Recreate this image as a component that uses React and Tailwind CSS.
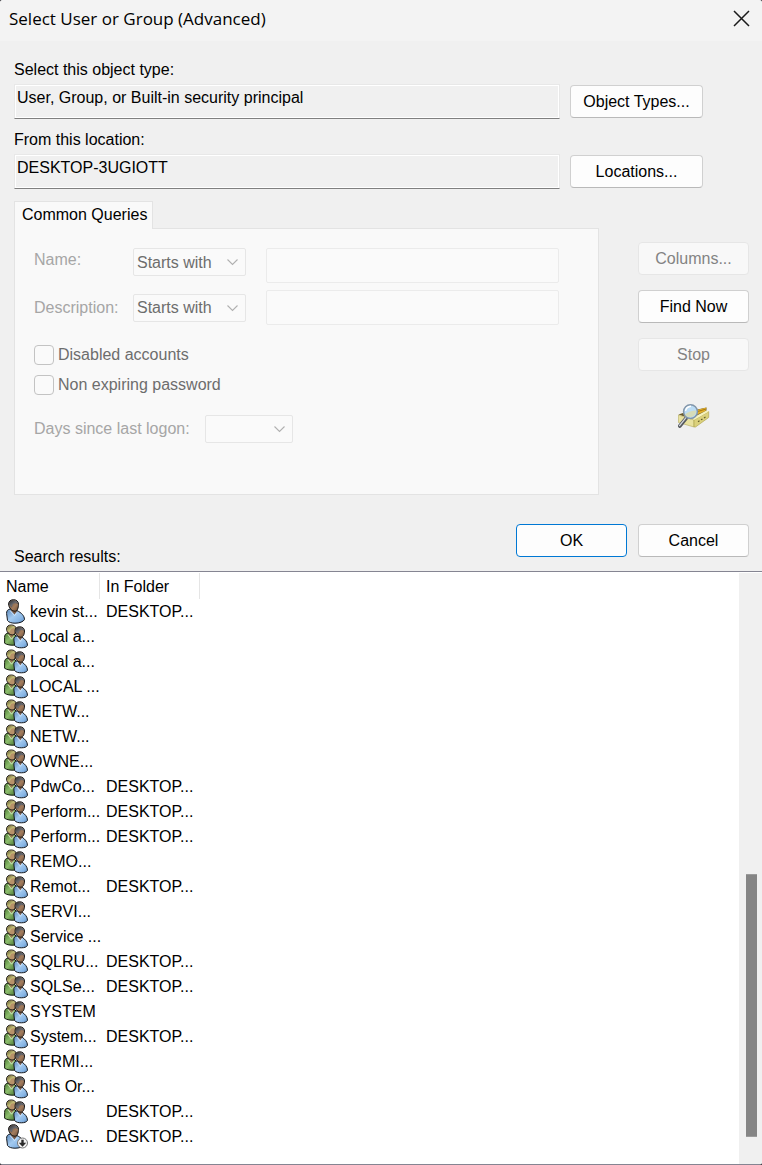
import { useState } from "react";
import clsx from "clsx";

const DESKTOP = "DESKTOP...";

const results = [
  { name: "kevin st...", folder: DESKTOP, type: "user" },
  { name: "Local a...", folder: "", type: "group" },
  { name: "Local a...", folder: "", type: "group" },
  { name: "LOCAL ...", folder: "", type: "group" },
  { name: "NETW...", folder: "", type: "group" },
  { name: "NETW...", folder: "", type: "group" },
  { name: "OWNE...", folder: "", type: "group" },
  { name: "PdwCo...", folder: DESKTOP, type: "group" },
  { name: "Perform...", folder: DESKTOP, type: "group" },
  { name: "Perform...", folder: DESKTOP, type: "group" },
  { name: "REMO...", folder: "", type: "group" },
  { name: "Remot...", folder: DESKTOP, type: "group" },
  { name: "SERVI...", folder: "", type: "group" },
  { name: "Service ...", folder: "", type: "group" },
  { name: "SQLRU...", folder: DESKTOP, type: "group" },
  { name: "SQLSe...", folder: DESKTOP, type: "group" },
  { name: "SYSTEM", folder: "", type: "group" },
  { name: "System...", folder: DESKTOP, type: "group" },
  { name: "TERMI...", folder: "", type: "group" },
  { name: "This Or...", folder: "", type: "group" },
  { name: "Users", folder: DESKTOP, type: "group" },
  { name: "WDAG...", folder: DESKTOP, type: "disabled" },
];

// gradients shared by all the people icons
const IconDefs = () => (
  <svg width="0" height="0" className="absolute" aria-hidden="true">
    <defs>
      <linearGradient id="blue" x1="0" y1="0" x2="1" y2="1">
        <stop offset="0" stopColor="#5a86b8" />
        <stop offset="0.45" stopColor="#a3caf0" />
        <stop offset="0.75" stopColor="#86b4e4" />
        <stop offset="1" stopColor="#4f7cb0" />
      </linearGradient>
      <linearGradient id="green" x1="0" y1="0" x2="1" y2="1">
        <stop offset="0" stopColor="#4a7a34" />
        <stop offset="0.45" stopColor="#8dbd6c" />
        <stop offset="1" stopColor="#3f6b2c" />
      </linearGradient>
      <linearGradient id="face" x1="0" y1="0" x2="1" y2="1">
        <stop offset="0" stopColor="#6b4f3c" />
        <stop offset="0.6" stopColor="#a37d5e" />
        <stop offset="1" stopColor="#6d4d37" />
      </linearGradient>
      <linearGradient id="hair" x1="0" y1="0" x2="1" y2="1">
        <stop offset="0" stopColor="#2e2e30" />
        <stop offset="0.5" stopColor="#6b6b70" />
        <stop offset="1" stopColor="#3c3c3e" />
      </linearGradient>
      <linearGradient id="blond" x1="0" y1="0" x2="1" y2="1">
        <stop offset="0" stopColor="#5f5c2c" />
        <stop offset="0.5" stopColor="#c4bd78" />
        <stop offset="1" stopColor="#807a44" />
      </linearGradient>
    </defs>
  </svg>
);

const UserIcon = ({ disabled }) => (
  <svg className="shrink-0" width="24" height="25" viewBox="0 0 24 25" aria-hidden="true">
    <path
      d="M6 10C3.700 10.500 2.400 12 2.600 14.500L3.500 21.500C4.800 23.500 8 24.200 11 24.200c4.500 0 8.300-1.400 9.500-3.700C20.300 16.500 17.500 14 13 11.500z"
      fill="url(#blue)"
      stroke="#14181f"
      strokeWidth="1"
    />
    <path d="M6.500 11 10.500 15.500 13.300 12 10 10z" fill="#7a5a44" />
    <path d="M6 11.500 10.500 16.700 13 13.500" fill="none" stroke="#cfe4fa" strokeWidth="0.900" />
    <path
      d="M4.600 5C4.600 2.200 6.700.7 9.500.7s5 1.600 5 4.600c0 3.300-1 6.900-3.600 6.900C8 12.200 4.600 8.800 4.600 5z"
      fill="url(#face)"
      stroke="#161616"
      strokeWidth="1"
    />
    <path d="M5.100 6C4.700 3 6.500 1.200 9.500 1.200S14 2.900 14 5C12.300 4 10.200 4.200 9 5L7.700 8.500z" fill="url(#hair)" />
    {disabled && (
      <g>
        <circle cx="18.500" cy="19" r="5" fill="#f0f0f0" stroke="#777" />
        <path d="M17.300 15.800h2.400v2.900h2.500l-3.700 4-3.700-4h2.500z" fill="#2b2b2b" />
      </g>
    )}
  </svg>
);

const GroupIcon = () => (
  <svg className="shrink-0" width="24" height="25" viewBox="0 0 24 25" aria-hidden="true">
    <path
      d="M4 9C1.500 9.500.5 11 .6 13.500v5.700c2 1.600 6 2.300 10.900 1.900L13 13 9 9z"
      fill="url(#green)"
      stroke="#141a10"
      strokeWidth="1"
    />
    <path d="m4.300 10 3.200 4 2.500-3z" fill="#a07a54" />
    <path d="m3.900 10.500 3.700 4.700 2-2.700" fill="none" stroke="#d4e8c0" strokeWidth="0.900" />
    <path
      d="M2.600 5c0-2.700 2-4 4.700-4S12 2.300 12 5c0 3-1.200 6-3.800 6S2.600 8.400 2.600 5z"
      fill="#b8926a"
      stroke="#161616"
      strokeWidth="1"
    />
    <path d="M3.100 6.500C2.600 3.300 4.300 1.500 7.300 1.500s4.200 1.500 4.200 3.500C9.900 4 8.300 4.200 7 5L5.700 8.500z" fill="url(#blond)" />
    <path
      d="M13.300 11.700c-2.500.5-3.700 2-3.400 4.300l.7 5.500c1.500 1.900 4 2.300 6.700 2.300 3.200 0 5.400-.8 6.200-2.500-.1-3.500-2.200-6-5.500-8.100z"
      fill="url(#blue)"
      stroke="#14181f"
      strokeWidth="1"
    />
    <path d="m13.300 12.500 3 3.700 2.400-3.200z" fill="#7a5a44" />
    <path d="m12.900 13 3.500 4.300 1.900-2.800" fill="none" stroke="#cfe4fa" strokeWidth="0.900" />
    <path
      d="M11 6.800c0-2.700 2-4 4.700-4s4.800 1.500 4.800 4.200c0 3.200-1.200 6.200-3.700 6.200-2.700 0-5.800-3-5.800-6.400z"
      fill="url(#face)"
      stroke="#161616"
      strokeWidth="1"
    />
    <path d="M11.500 8c-.5-3.200 1.200-4.700 4.200-4.700s4.400 1.500 4.300 3.500c-1.600-1-3.200-.9-4.400-.1l-1.500 3.300z" fill="url(#hair)" />
  </svg>
);

const SearchFolderIcon = () => (
  <svg width="32" height="24" viewBox="0 0 32 24" aria-hidden="true">
    <path d="M.5 10.500 8 8l20.500-4.500V7L16 16z" fill="#6a5a2a" />
    <path d="M17 6.500 28.500 3.500 27.500 7 18 11z" fill="#e3b02a" />
    <path d="m18 8 10-3" stroke="#a87812" />
    <path d="M.3 11 16 16v7L.5 18.500z" fill="#e9e2a0" stroke="#b3a95c" strokeWidth="0.600" />
    <path d="M16 16 30.700 7.500v6L17.500 23H16z" fill="#dbd17c" stroke="#a99d45" strokeWidth="0.600" />
    <path d="m13 14.500 15.500-8 2.200 1L16 16z" fill="#f7f3bd" />
    <path d="m20 17.700 1.500-.9m1.500-1 1.500-.9m1.500-1 1.500-.9" stroke="#625b2a" strokeWidth="1.200" />
    <path d="m1.800 22 6.500-8" stroke="#55595f" strokeWidth="3.600" strokeLinecap="round" />
    <path d="M1.500 21.600 8 13.700" stroke="#d3d7dc" strokeWidth="1.300" strokeLinecap="round" />
    <circle cx="12.500" cy="7.700" r="6.900" fill="#bcdcf4" stroke="#8296aa" strokeWidth="1.500" />
    <path d="M7 10.500c3-2.500 7-4 11.200-4-.2 4-2.700 6.500-5.700 6.500S8 12.500 7 10.500z" fill="#d6dcb9" />
    <path d="M7.500 7C8 4 10 2.500 13 2.200" stroke="#fff" strokeWidth="1.500" fill="none" />
  </svg>
);

const Button = ({ children, primary, className, ...props }) => (
  <button
    type="button"
    className={clsx(
      "h-[33px] shrink-0 rounded-[4px] border text-center",
      primary && "border-[#0078d4] bg-[#fdfdfd]",
      !primary &&
        "border-[#d0d0d0] border-b-[#b9b9b9] bg-[#fdfdfd] disabled:border-[#e6e6e6] disabled:bg-[#f8f8f8] disabled:text-[#838383]",
      className
    )}
    {...props}
  >
    {children}
  </button>
);

const ReadOnlyField = ({ id, label, value, button }) => (
  <div>
    <label htmlFor={id} className="block">
      {label}
    </label>
    <div className="mt-[2px] flex items-center gap-[10px]">
      <div className="min-w-0 flex-1 border border-[#e8e8e8] border-b-[#7f7f7f]">
        <input
          id={id}
          readOnly
          value={value}
          className="block h-[33px] w-full border border-white bg-transparent px-px pb-[8px] outline-none"
        />
      </div>
      <Button className="w-[133px]">{button}</Button>
    </div>
  </div>
);

const Dropdown = ({ id, options, className }) => (
  <div className={clsx("relative h-[28px]", className)}>
    <select
      id={id}
      disabled
      className="block h-full w-full appearance-none rounded-[2px] border border-[#e6e6e6] bg-[#fafafa] pt-px pl-[3px] text-[#6d6d6d] opacity-100"
    >
      {options.map((option) => (
        <option key={option}>{option}</option>
      ))}
    </select>
    <svg
      className="pointer-events-none absolute top-[10px] right-[7px]"
      width="13"
      height="8"
      viewBox="0 0 13 8"
      aria-hidden="true"
    >
      <path d="m1.500 1.500 5 5 5-5" fill="none" stroke="#b0b0b0" strokeWidth="1.100" />
    </svg>
  </div>
);

const QueryInput = ({ label }) => (
  <input
    type="text"
    aria-label={label}
    disabled
    className="h-[35px] w-full min-w-0 rounded-[2px] border border-[#ebebeb] bg-[#fafafa] px-1"
  />
);

const Checkbox = ({ id, label }) => (
  <div className="flex items-center gap-[4px]">
    <input
      id={id}
      type="checkbox"
      disabled
      className="size-[20px] appearance-none rounded-[4px] border border-[#c3c3c3] bg-[#fafafa]"
    />
    <label htmlFor={id} className="text-[#6d6d6d]">
      {label}
    </label>
  </div>
);

const App = () => {
  const [tab, setTab] = useState("common");

  return (
    <div className="bg-[#3c3c40]">
      <main className="overflow-hidden rounded-[3px] border-b border-[#858592] bg-[#f0f0f0] font-['Liberation_Sans',Arial,sans-serif] text-[16px] leading-[24px] text-black">
        <IconDefs />
        <header className="flex h-[41px] items-center justify-between bg-[#f3f3f3] pr-[12px] pb-[4px] pl-[9px]">
          <h1 className="font-['Open_Sans','Noto_Sans',sans-serif] text-[17px]">
            Select User or Group (Advanced)
          </h1>
          <button type="button" aria-label="Close">
            <svg width="17" height="17" viewBox="0 0 17 17" aria-hidden="true">
              <path d="m1 1 15 15M16 1 1 16" stroke="#1a1a1a" strokeWidth="1.500" />
            </svg>
          </button>
        </header>

        <div className="flex flex-col gap-[9px] pt-[17px] pr-[59px] pl-[14px]">
          <ReadOnlyField
            id="objectType"
            label="Select this object type:"
            value="User, Group, or Built-in security principal"
            button="Object Types..."
          />
          <ReadOnlyField
            id="location"
            label="From this location:"
            value="DESKTOP-3UGIOTT"
            button="Locations..."
          />
        </div>

        <div className="mt-[12px] flex gap-[39px] pr-[13px] pl-[14px]">
          <div className="min-w-0 flex-1">
            <button
              type="button"
              role="tab"
              aria-selected={tab === "common"}
              onClick={() => setTab("common")}
              className="relative -mb-px block h-[28px] border border-b-0 border-[#e3e3e3] bg-[#f9f9f9] pr-[5px] pb-[2px] pl-[7px]"
            >
              Common Queries
            </button>
            <div className="min-h-[267px] border border-[#e3e3e3] bg-[#f9f9f9] pt-[19px] pr-[39px] pl-[19px]">
              <div className="grid grid-cols-[99px_113px_1fr]">
                <label htmlFor="nameMatch" className="text-[#a6a6a6]">
                  Name:
                </label>
                <Dropdown id="nameMatch" options={["Starts with"]} />
                <div className="pl-[20px]">
                  <QueryInput label="Name value" />
                </div>
              </div>
              <div className="mt-[7px] grid grid-cols-[99px_113px_1fr] items-center">
                <label htmlFor="descMatch" className="text-[#a6a6a6]">
                  Description:
                </label>
                <Dropdown id="descMatch" options={["Starts with"]} />
                <div className="pl-[20px]">
                  <QueryInput label="Description value" />
                </div>
              </div>

              <div className="mt-[18px] flex flex-col gap-[6px]">
                <Checkbox id="disabledAccounts" label="Disabled accounts" />
                <Checkbox id="nonExpiring" label="Non expiring password" />
              </div>

              <div className="mt-[18px] flex items-center gap-[15px]">
                <label htmlFor="lastLogon" className="text-[#a6a6a6]">
                  Days since last logon:
                </label>
                <Dropdown id="lastLogon" options={[""]} className="w-[88px]" />
              </div>
            </div>
          </div>

          <div className="flex w-[111px] flex-col gap-[15px] pt-[41px]">
            <Button disabled>Columns...</Button>
            <Button>Find Now</Button>
            <Button disabled>Stop</Button>
            <div className="mt-[18px] flex justify-center">
              <SearchFolderIcon />
            </div>
          </div>
        </div>

        <div className="mt-[29px] flex items-start gap-[11px] pr-[13px] pb-[14px] pl-[14px]">
          <h2 className="mt-[21px] -mb-[12px] flex-1">Search results:</h2>
          <Button primary className="w-[111px]">
            OK
          </Button>
          <Button className="w-[111px]">Cancel</Button>
        </div>

        <div className="flex border-t border-[#858592] bg-white">
          <div className="min-w-0 flex-1 pt-px pb-[15px]">
            <table className="w-[200px] table-fixed border-separate border-spacing-0 text-left whitespace-nowrap">
              <thead>
                <tr className="h-[26px]">
                  <th className="w-[100px] border-r border-[#e5e5e5] p-0 pt-[2px] pl-[6px] font-normal">
                    Name
                  </th>
                  <th className="w-[100px] border-r border-[#e5e5e5] p-0 pt-[2px] pl-[6px] font-normal">
                    In Folder
                  </th>
                </tr>
              </thead>
              <tbody>
                {results.map((item, index) => (
                  <tr key={index} className="h-[25px]">
                    <td className="p-0 pl-[4px]">
                      <div className="flex h-[25px] items-center gap-[2px]">
                        {item.type === "group" ? (
                          <GroupIcon />
                        ) : (
                          <UserIcon disabled={item.type === "disabled"} />
                        )}
                        <span>{item.name}</span>
                      </div>
                    </td>
                    <td className="p-0 pl-[6px]">{item.folder}</td>
                  </tr>
                ))}
              </tbody>
            </table>
          </div>
          <div className="mt-px flex w-[23px] flex-col items-end justify-end bg-[#f0f0f0] pr-[5px] pb-[27px]">
            <div className="h-[263px] w-[11px] border-y border-[#9b9b9b] bg-[#858585]" />
          </div>
        </div>
      </main>
    </div>
  );
};

export default App;
